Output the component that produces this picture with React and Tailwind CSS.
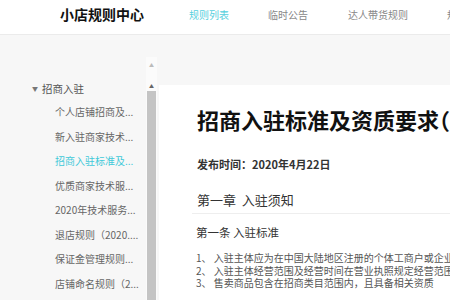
import React from 'react';

const menu = [
  '个人店铺招商及...',
  '新入驻商家技术...',
  '招商入驻标准及...',
  '优质商家技术服...',
  '2020年技术服务...',
  '退店规则（2020....',
  '保证金管理规则...',
  '店铺命名规则（2...',
  '商品发布规范...',
];

export default function App() {
  return (
    <div className="w-[450px] h-[300px] overflow-hidden bg-[#f7f7f7] font-['Noto_Sans_CJK_SC','Noto_Sans',sans-serif]">
      <header className="h-[35px] pb-[6px] bg-white border-b border-[#ebebeb] flex items-center whitespace-nowrap overflow-hidden">
        <div className="ml-[60px] text-[14px] font-bold text-[#111]">小店规则中心</div>
        <nav className="flex items-center text-[10px] text-[#888] ml-[45px]">
          <span className="text-[#56cfdd]">规则列表</span>
          <span className="ml-[39px]">临时公告</span>
          <span className="ml-[40px]">达人带货规则</span>
          <span className="ml-[39px]">规则解读</span>
        </nav>
      </header>

      <div className="flex h-[265px]">
        <aside className="w-[146px] pt-[43px] text-[10px] text-[#666] whitespace-nowrap">
          <div className="flex items-center leading-[22px] pl-[32px]">
            <span className="text-[6px] text-[#777] w-[10px]">▼</span>
            <span className="text-[10.5px] text-[#555]">招商入驻</span>
          </div>
          {menu.map((m, i) => (
            <div key={i} className={`pl-[55px] leading-[24.5px] ${i === 2 ? 'text-[#3fc9d9]' : ''}`}>{m}</div>
          ))}
        </aside>

        <div className="w-[11px] mt-[22px] flex flex-col items-center bg-[#fbfbfb]">
          <span className="mt-[5px] text-[5px] leading-[6px] text-[#bbb]">▲</span>
          <span className="mt-[15px] text-[5px] leading-[6px] text-[#666]">▲</span>
          <div className="mt-[2px] w-[9px] flex-1 bg-[#c4c4c4]" />
        </div>

        <main className="flex-1 mt-[50px] ml-[2px] bg-white pl-[33px] whitespace-nowrap overflow-hidden">
          <h1 className="pl-[5px] pt-[18px] text-[22px] leading-[32px] font-bold text-[#111] [font-feature-settings:'halt']">招商入驻标准及资质要求（2020）</h1>
          <div className="pl-[5px] mt-[22px] text-[11px] leading-[14px] font-bold text-[#333]">发布时间：2020年4月22日</div>
          <div className="mt-[17px] pl-[5px] border-b border-[#eeeeee] text-[13px] leading-[24px] pb-[1px] text-[#333]">第一章&nbsp;&nbsp;入驻须知</div>
          <div className="pl-[4px] mt-[10px] text-[11.5px] leading-[16px] text-[#333]">第一条 入驻标准</div>
          <div className="pl-[4px] mt-[12px] text-[10px] leading-[12.5px] text-[#555]">
            <div>1、 入驻主体应为在中国大陆地区注册的个体工商户或企业</div>
            <div>2、 入驻主体经营范围及经营时间在营业执照规定经营范围及经营期限内</div>
            <div>3、 售卖商品包含在招商类目范围内，且具备相关资质</div>
          </div>
        </main>
      </div>
    </div>
  );
}
